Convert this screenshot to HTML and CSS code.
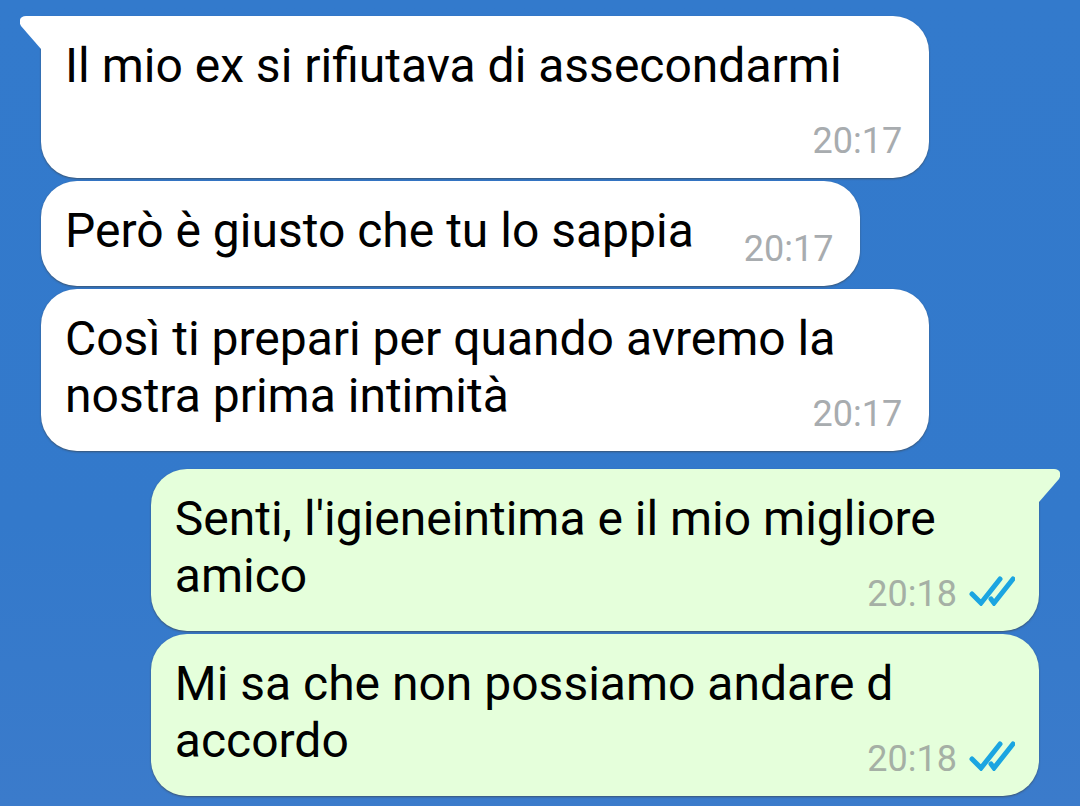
FILE: index.html
```
<!DOCTYPE html>
<html lang="it">
<head>
    <meta charset="UTF-8">
    <meta name="viewport" content="width=device-width, initial-scale=1.0">
    <title>Chat</title>
    <link rel="stylesheet" href="styles.css">
</head>
<body>

    <main class="chat">
        <div class="message received first">
            <svg class="tail" viewBox="0 0 22 34" aria-hidden="true"><path d="M22 0H6C0 0-2 5 1 10L21 33H22Z"/></svg>
            <span class="text">Il mio ex si rifiutava di assecondarmi</span>
            <span class="meta"><time>20:17</time></span>
        </div>

        <div class="message received">
            <span class="text">Però è giusto che tu lo sappia</span>
            <span class="meta"><time>20:17</time></span>
        </div>

        <div class="message received">
            <span class="text">Così ti prepari per quando avremo la nostra prima intimità</span>
            <span class="meta"><time>20:17</time></span>
        </div>

        <div class="message sent first">
            <svg class="tail" viewBox="0 0 22 34" aria-hidden="true"><path d="M0 0H16C22 0 24 5 21 10L1 33H0Z"/></svg>
            <span class="text">Senti, l'igieneintima e il mio migliore amico</span>
            <span class="meta">
                <time>20:18</time>
                <svg class="ticks" viewBox="0 0 46 30" role="img" aria-label="Letto"><path d="M3 18L12 27L31 3M22 23L25 27L44 3"/></svg>
            </span>
        </div>

        <div class="message sent">
            <span class="text">Mi sa che non possiamo andare d accordo</span>
            <span class="meta">
                <time>20:18</time>
                <svg class="ticks" viewBox="0 0 46 30" role="img" aria-label="Letto"><path d="M3 18L12 27L31 3M22 23L25 27L44 3"/></svg>
            </span>
        </div>
    </main>

</body>
</html>
```
FILE: styles.css
```
body {
    margin: 0;
    min-height: 100vh;
    font-family: Roboto, Arial, sans-serif;
    background: linear-gradient(#337acc 0%, #3379cb 65%, #3b7bcb 100%);
}

.chat {
    display: flex;
    flex-direction: column;
    align-items: flex-start;
    gap: 3px;
    padding: 16px 41px 10px;
}

.message {
    position: relative;
    display: flow-root;
    box-sizing: border-box;
    max-width: 89%;
    padding: 21px 24px 16px;
    border-radius: 36px;
    font-size: 48px;
    line-height: 57px;
    color: #000;
    box-shadow: 0 1px 2px rgba(60, 70, 80, 0.7);
}

.received {
    background-color: #fff;
}

.sent {
    align-self: flex-end;
    background-color: #e5ffdb;
}

.received.first {
    border-top-left-radius: 0;
}

.sent.first {
    margin-top: 15px;
    border-top-right-radius: 0;
}

/* corner that points at the sender */
.tail {
    position: absolute;
    top: 0;
    width: 22px;
    height: 34px;
}

.received .tail {
    left: -21px;
    fill: #fff;
}

.sent .tail {
    right: -21px;
    fill: #e5ffdb;
}

/* floats beside the last line, or drops below it when there is no room */
.meta {
    float: right;
    display: flex;
    align-items: center;
    gap: 12px;
    margin: 26px 0 0 50px;
    font-size: 36px;
    line-height: 42px;
    color: #a8acaf;
}

.received .meta {
    padding-right: 3px;
}

.sent .meta {
    color: #a5b0a5;
}

.ticks {
    width: 46px;
    height: 30px;
    margin-bottom: 6px;
    fill: none;
    stroke: #1ba5e1;
    stroke-width: 5;
    stroke-linecap: round;
}
```
